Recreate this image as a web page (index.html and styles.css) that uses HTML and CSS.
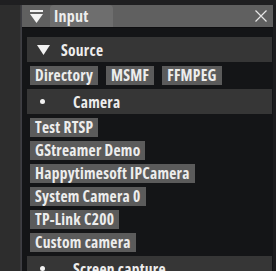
FILE: index.html
```html
<!DOCTYPE html>
<html lang="en">
<head>
    <meta charset="UTF-8">
    <title>Input</title>
    <link rel="stylesheet" href="styles.css">
</head>
<body>
    <div class="top-strip"></div>
    <div class="main">
        <div class="sidebar"></div>
        <div class="window">
            <div class="title-bar">
                <svg class="menu-icon" width="13" height="13" viewBox="0 0 13 13">
                    <rect x="0" y="0" width="13" height="2" fill="#f2f2f2"/>
                    <polygon points="0,4 13,4 6.5,13" fill="#f2f2f2"/>
                </svg>
                <div class="tab">Input</div>
                <svg class="close-icon" width="12" height="12" viewBox="0 0 12 12">
                    <path d="M0.5 0.5 L11.5 11.5 M11.5 0.5 L0.5 11.5" stroke="#e6e6e6" stroke-width="1.2" fill="none"/>
                </svg>
            </div>
            <div class="content">
                <div class="header">
                    <svg class="arrow" width="13" height="10" viewBox="0 0 13 10">
                        <polygon points="0,0 13,0 6.5,10" fill="#f2f2f2"/>
                    </svg>
                    <span class="header-label">Source</span>
                </div>
                <div class="button-row">
                    <span class="btn">Directory</span>
                    <span class="btn">MSMF</span>
                    <span class="btn">FFMPEG</span>
                </div>
                <div class="header">
                    <span class="bullet"></span>
                    <span class="header-label leaf">Camera</span>
                </div>
                <span class="btn">Test RTSP</span>
                <span class="btn">GStreamer Demo</span>
                <span class="btn">Happytimesoft IPCamera</span>
                <span class="btn">System Camera 0</span>
                <span class="btn">TP-Link C200</span>
                <span class="btn">Custom camera</span>
                <div class="header">
                    <span class="bullet"></span>
                    <span class="header-label leaf">Screen capture</span>
                </div>
            </div>
        </div>
        <div class="right-strip"></div>
    </div>
</body>
</html>
```

FILE: styles.css
```css
:root {
    --text-color: #ededed;
    --window-bg: #141517;
    --title-bg: #606060;
    --tab-bg: #6e6e6e;
    --header-bg: #363636;
    --button-bg: #5b5b5b;
}

* {
    margin: 0;
    padding: 0;
    box-sizing: border-box;
}

body {
    width: 276px;
    height: 271px;
    overflow: hidden;
    background-color: #1e1e1f;
    color: var(--text-color);
    font-family: 'Open Sans', sans-serif;
    font-stretch: 80%;
    font-weight: 700;
    font-size: 15.5px;
    letter-spacing: 0.25px;
}

.top-strip {
    height: 5px;
    background-color: #1f1f21;
}

.main {
    display: flex;
    height: 266px;
}

.sidebar {
    width: 21px;
    background-color: #2d2d2d;
    border-right: 1px solid #3a3a3c;
}

.window {
    width: 252px;
    display: flex;
    flex-direction: column;
    background-color: var(--window-bg);
    border-left: 1px solid #3e3e44;
}

.title-bar {
    height: 25px;
    display: flex;
    align-items: flex-end;
    background-color: var(--title-bg);
    border-bottom: 1px solid #0e0e10;
    padding-left: 8px;
    padding-right: 6px;
}

.menu-icon {
    align-self: center;
    margin-right: 7px;
}

.tab {
    width: 63px;
    height: 22px;
    line-height: 22px;
    padding-left: 4px;
    background-color: var(--tab-bg);
    border-radius: 4px 4px 0 0;
    font-size: 16px;
}

.close-icon {
    align-self: center;
    margin-left: auto;
}

.content {
    display: flex;
    flex-direction: column;
    align-items: flex-start;
    gap: 4px;
    padding: 9px 1px 0 5px;
}

.header {
    width: 245px;
    height: 25px;
    display: flex;
    align-items: center;
    flex-shrink: 0;
    background-color: var(--header-bg);
}

.arrow {
    margin-left: 10px;
    margin-right: 11px;
}

.bullet {
    width: 5px;
    height: 5px;
    margin-left: 13px;
    border-radius: 50%;
    background-color: #f2f2f2;
}

.header-label.leaf {
    margin-left: 28px;
}

.button-row {
    display: flex;
    gap: 8px;
}

.btn {
    margin-left: 3px;
    height: 19px;
    line-height: 19px;
    padding: 0 5px;
    flex-shrink: 0;
    background-color: var(--button-bg);
    white-space: nowrap;
}

.button-row .btn + .btn {
    margin-left: 0;
}

.right-strip {
    flex: 1;
    background-color: #1c1c1e;
}
```
